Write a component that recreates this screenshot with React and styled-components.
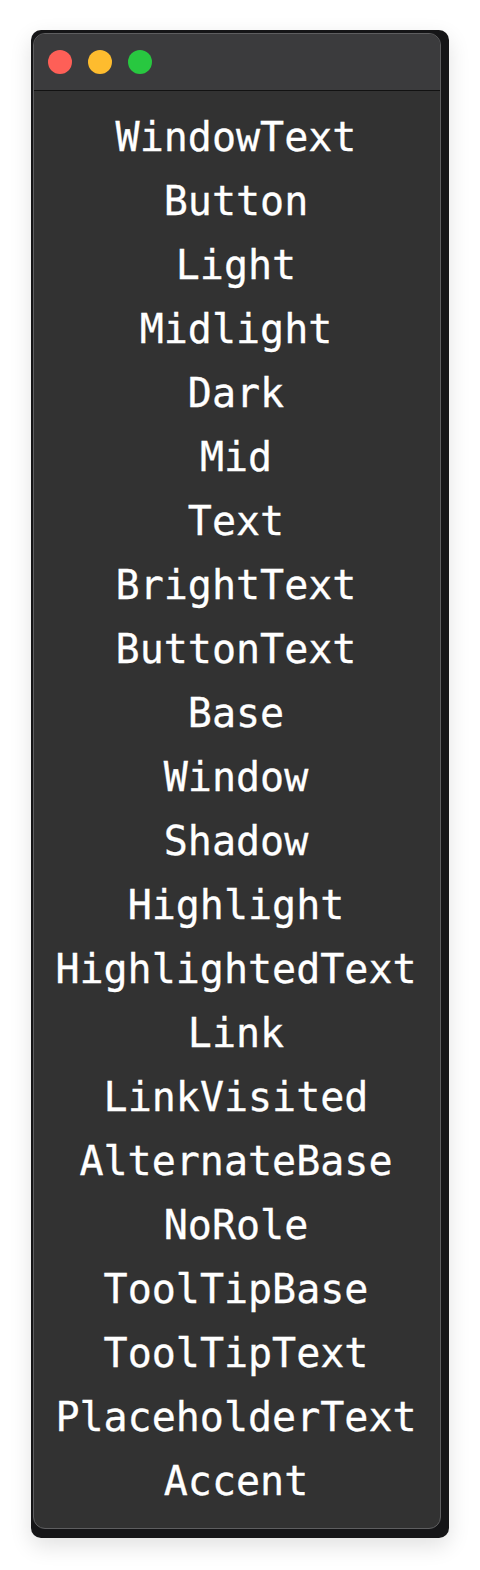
import React from "react";
import styled, { createGlobalStyle } from "styled-components";

const GlobalStyle = createGlobalStyle`
    html, body {
        margin: 0;
        padding: 0;
        background: #ffffff;
    }
`;

const Stage = styled.div`
    padding: 30px 31px;
`;

const Backdrop = styled.div`
    width: 418px;
    height: 1508px;
    box-sizing: border-box;
    background-color: #151517;
    border-radius: 10px;
    padding: 3px 8px 9px 2px;
    box-shadow: 0 8px 22px rgba(0, 0, 0, 0.12);
    display: flex;
`;

const Window = styled.div`
    flex: 1;
    display: flex;
    flex-direction: column;
    border: 1px solid #5e5e60;
    border-radius: 12px;
    overflow: hidden;
    background-color: #323232;
`;

const TitleBar = styled.div`
    height: 56px;
    flex-shrink: 0;
    background-color: #3b3b3d;
    border-bottom: 1px solid #121212;
    display: flex;
    align-items: center;
    gap: 16px;
    padding-left: 14px;
`;

const Light = styled.span`
    width: 24px;
    height: 24px;
    border-radius: 50%;
    background-color: ${(p) => p.color};
`;

const RoleList = styled.div`
    flex: 1;
    display: flex;
    flex-direction: column;
    align-items: center;
    padding-top: 14px;
    padding-right: 2px;
`;

const Role = styled.div`
    font-family: "DejaVu Sans Mono", monospace;
    font-size: 40px;
    line-height: 64px;
    color: #ffffff;
    white-space: nowrap;
    -webkit-text-stroke: 0.3px #ffffff;
`;

const roles = [
    "WindowText", "Button", "Light", "Midlight", "Dark", "Mid", "Text",
    "BrightText", "ButtonText", "Base", "Window", "Shadow", "Highlight",
    "HighlightedText", "Link", "LinkVisited", "AlternateBase", "NoRole",
    "ToolTipBase", "ToolTipText", "PlaceholderText", "Accent",
];

export default function App() {
    return (
        <Stage>
            <GlobalStyle />
            <Backdrop>
                <Window>
                    <TitleBar>
                        <Light color="#fe5f57" />
                        <Light color="#febc2e" />
                        <Light color="#28c840" />
                    </TitleBar>
                    <RoleList>
                        {roles.map((r) => <Role key={r}>{r}</Role>)}
                    </RoleList>
                </Window>
            </Backdrop>
        </Stage>
    );
}
